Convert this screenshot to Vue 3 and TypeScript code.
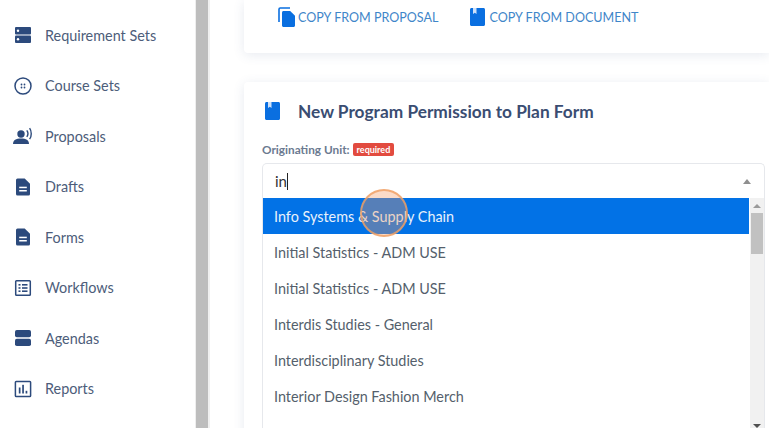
<script setup lang="ts">
const navItems: { label: string; icon: string }[] = [
  { label: 'Requirement Sets', icon: 'server' },
  { label: 'Course Sets', icon: 'button' },
  { label: 'Proposals', icon: 'voice' },
  { label: 'Drafts', icon: 'doc' },
  { label: 'Forms', icon: 'doc' },
  { label: 'Workflows', icon: 'list' },
  { label: 'Agendas', icon: 'agenda' },
  { label: 'Reports', icon: 'chart' },
]
const options: string[] = [
  'Info Systems & Supply Chain',
  'Initial Statistics - ADM USE',
  'Initial Statistics - ADM USE',
  'Interdis Studies - General',
  'Interdisciplinary Studies',
  'Interior Design Fashion Merch',
]
</script>

<template>
  <div class="page">
    <aside class="sidebar">
      <div v-for="item in navItems" :key="item.label" class="nav-item">
        <svg class="nav-icon" viewBox="0 0 18 18" aria-hidden="true">
          <template v-if="item.icon === 'server'">
            <rect x="1" y="1" width="16" height="7.4" rx="1" fill="#2c4a7c" />
            <rect x="1" y="9.6" width="16" height="7.4" rx="1" fill="#2c4a7c" />
            <circle cx="4" cy="4.7" r="1.2" fill="#fff" />
            <circle cx="4" cy="13.3" r="1.2" fill="#fff" />
          </template>
          <template v-else-if="item.icon === 'button'">
            <circle cx="9" cy="9" r="8" fill="none" stroke="#2c4a7c" stroke-width="1.5" />
            <g fill="#2c4a7c">
              <circle cx="7.5" cy="7.500" r="0.9" /><circle cx="10.5" cy="7.500" r="0.9" />
              <circle cx="7.5" cy="10.5" r="0.9" /><circle cx="10.5" cy="10.5" r="0.9" />
            </g>
          </template>
          <template v-else-if="item.icon === 'voice'">
            <circle cx="7" cy="7" r="3.700" fill="#2c4a7c" />
            <path d="M-1 17c0-3.600 3-5.400 8-5.400s8 1.800 8 5.400z" fill="#2c4a7c" />
            <path d="M12.800 3.400c1.300 1.800 1.300 4.700 0 6.500M15.600 1.200c2.200 3 2.200 8 0 11" fill="none" stroke="#2c4a7c" stroke-width="1.400" />
          </template>
          <template v-else-if="item.icon === 'doc'">
            <path d="M3.500 0.500h7.200L16 5.800v10.200a1.500 1.500 0 0 1-1.500 1.500h-11A1.500 1.500 0 0 1 2 16V2A1.500 1.500 0 0 1 3.500 0.500z" fill="#2c4a7c" />
            <rect x="5.200" y="8.700" width="7.600" height="1.500" fill="#fff" />
            <rect x="5.200" y="12" width="7.600" height="1.500" fill="#fff" />
          </template>
          <template v-else-if="item.icon === 'list'">
            <rect x="1.700" y="1.700" width="14.600" height="14.600" rx="0.800" fill="none" stroke="#2c4a7c" stroke-width="1.500" />
            <g fill="#2c4a7c">
              <rect x="4.500" y="5" width="2" height="1.600" /><rect x="8" y="5" width="5.500" height="1.600" />
              <rect x="4.500" y="8.200" width="2" height="1.600" /><rect x="8" y="8.200" width="5.500" height="1.600" />
              <rect x="4.500" y="11.400" width="2" height="1.600" /><rect x="8" y="11.400" width="5.500" height="1.600" />
            </g>
          </template>
          <template v-else-if="item.icon === 'agenda'">
            <rect x="1" y="1" width="16" height="7.300" rx="1.800" fill="#2c4a7c" />
            <rect x="1" y="9.700" width="16" height="7.300" rx="1.800" fill="#2c4a7c" />
          </template>
          <template v-else>
            <rect x="1.400" y="1.400" width="15.200" height="15.200" rx="0.800" fill="none" stroke="#2c4a7c" stroke-width="1.500" />
            <g fill="#2c4a7c">
              <rect x="4.800" y="7.500" width="1.700" height="6" /><rect x="8.200" y="4.800" width="1.700" height="8.700" /><rect x="11.600" y="10.800" width="1.700" height="2.700" />
            </g>
          </template>
        </svg>
        <span class="nav-label">{{ item.label }}</span>
      </div>
    </aside>
    <div class="side-scroll"></div>
    <main class="main">
      <section class="card card-top">
        <a class="copy-link">
          <svg class="copy-icon" viewBox="0 0 18 20" aria-hidden="true">
            <path d="M1 15V2.200C1 1.500 1.500 1 2.200 1H12" fill="none" stroke="#0a6fe0" stroke-width="1.600" />
            <path d="M5.500 4h6.700L17 8.800v9.700c0 .8-.7 1.500-1.500 1.500h-10C4.700 20 4 19.300 4 18.500v-13C4 4.700 4.700 4 5.500 4z" fill="#0a6fe0" />
          </svg>
          COPY FROM PROPOSAL
        </a>
        <a class="copy-link doc-link">
          <svg class="book-icon" viewBox="0 0 15 18" aria-hidden="true">
            <path d="M1.500 0h12c.8 0 1.500.7 1.500 1.500v15c0 .8-.7 1.500-1.500 1.500h-12C.7 18 0 17.300 0 16.500v-15C0 .7.700 0 1.500 0z" fill="#0a6fe0" />
            <path d="M3 0h3.500v6L4.800 4.700 3 6z" fill="#cfe2fa" />
          </svg>
          COPY FROM DOCUMENT
        </a>
      </section>
      <section class="card card-form">
        <h2 class="form-title">
          <svg class="title-icon" viewBox="0 0 15 18" aria-hidden="true">
            <path d="M1.500 0h12c.8 0 1.500.7 1.500 1.500v15c0 .8-.7 1.500-1.500 1.500h-12C.7 18 0 17.300 0 16.500v-15C0 .7.700 0 1.500 0z" fill="#0a6fe0" />
            <path d="M3 0h3.500v6L4.800 4.700 3 6z" fill="#cfe2fa" />
          </svg>
          New Program Permission to Plan Form
        </h2>
        <div class="field-label">
          <span>Originating Unit:</span>
          <span class="badge">required</span>
        </div>
        <div class="select">
          <div class="select-input">
            <span class="typed">in</span><span class="caret"></span>
            <span class="arrow"></span>
          </div>
          <div class="dropdown">
            <ul class="options">
              <li v-for="(opt, i) in options" :key="i" class="option" :class="{ active: i === 0 }">{{ opt }}</li>
            </ul>
            <div class="drop-scroll">
              <span class="drop-arrow"></span>
              <span class="drop-thumb"></span>
              <span class="drop-arrow-down"></span>
            </div>
          </div>
          <div class="click-ring"></div>
        </div>
      </section>
    </main>
  </div>
</template>

<style>
html, body { margin: 0; overflow: hidden; background: #fff; }
</style>

<style scoped>
.page {
  width: 769px;
  height: 428px;
  overflow: hidden;
  display: flex;
  font-family: Lato, "Liberation Sans", sans-serif;
  background: #fff;
}
.sidebar {
  width: 196px;
  flex: none;
  padding-top: 10px;
  border-right: 1px solid #eeeeee;
  box-sizing: border-box;
}
.nav-item {
  height: 50.5px;
  display: flex;
  align-items: center;
  padding-left: 14px;
  box-sizing: border-box;
}
.nav-icon { width: 18px; height: 18px; flex: none; overflow: visible; }
.nav-label {
  margin-left: 13px;
  font-size: 14.400px;
  color: #4d5d7a;
}
.side-scroll {
  width: 12px;
  flex: none;
  background: #bdbdbd;
}
.main {
  flex: 1;
  min-width: 0;
  border-left: 2px solid #f0f0f0;
  padding-left: 34px;
  background: #fff;
}
.card {
  background: #fff;
  box-shadow: 0 2px 12px rgba(60, 80, 130, 0.12);
}
.card-top {
  height: 53px;
  display: flex;
  align-items: flex-start;
  padding: 7px 0 0 34px;
  box-sizing: border-box;
  border-radius: 0 0 0 4px;
}
.copy-link {
  display: flex;
  align-items: center;
  font-size: 12.550px;
  height: 20px;
  color: #3f86c9;
  white-space: nowrap;
}
.copy-icon { width: 18px; height: 20px; margin-right: 2px; }
.doc-link { margin-left: 32px; }
.book-icon { width: 15px; height: 18px; margin-right: 4px; }
.card-form {
  margin-top: 29px;
  height: 400px;
  padding: 18px 4px 0 18px;
  box-sizing: border-box;
  border-radius: 4px 0 0 4px;
}
.form-title {
  margin: 0;
  display: flex;
  align-items: center;
  height: 22px;
  font-size: 17.300px;
  font-weight: 700;
  color: #3a4d72;
  white-space: nowrap;
}
.title-icon { width: 15px; height: 18px; margin-left: 3px; margin-right: 18px; }
.field-label {
  margin-top: 19px;
  display: flex;
  align-items: center;
  height: 16px;
  font-size: 11.800px;
  font-weight: 700;
  color: #6b7a90;
}
.badge {
  margin-left: 3px;
  background: #e24b3f;
  color: #fff;
  font-size: 9px;
  line-height: 13px;
  padding: 0 4px;
  border-radius: 2px;
}
.select {
  position: relative;
  margin-top: 6px;
}
.select-input {
  position: relative;
  height: 35px;
  box-sizing: border-box;
  border: 1px solid #e6e8ec;
  border-bottom: 0;
  border-radius: 5px 5px 0 0;
  display: flex;
  align-items: center;
  padding-left: 12px;
  font-size: 15px;
  color: #333;
}
.caret { width: 1px; height: 17px; background: #222; }
.arrow {
  position: absolute;
  right: 13px;
  top: 15px;
  border-left: 4.500px solid transparent;
  border-right: 4.500px solid transparent;
  border-bottom: 5px solid #8f8f8f;
}
.dropdown {
  display: flex;
  height: 230px;
  border-left: 1px solid #e6e8ec;
  border-right: 1px solid #e6e8ec;
  box-sizing: border-box;
}
.options { flex: 1; margin: 0; padding: 0; list-style: none; min-width: 0; overflow: hidden; }
.option {
  height: 36px;
  line-height: 37px;
  padding-left: 11px;
  font-size: 14.400px;
  color: #555f6c;
  white-space: nowrap;
}
.option.active {
  background: #0272e6;
  color: #e8f1fb;
}
.drop-scroll {
  position: relative;
  width: 14px;
  flex: none;
  background: #f1f1f1;
  margin-left: 1px;
}
.drop-arrow {
  position: absolute;
  left: 3px;
  top: 6px;
  border-left: 4px solid transparent;
  border-right: 4px solid transparent;
  border-bottom: 4px solid #9a9a9a;
}
.drop-thumb {
  position: absolute;
  left: 1px;
  right: 1px;
  top: 15px;
  height: 41px;
  background: #c1c1c1;
}
.drop-arrow-down {
  position: absolute;
  left: 3px;
  bottom: 0;
  border-left: 4px solid transparent;
  border-right: 4px solid transparent;
  border-top: 4px solid #505050;
}
.click-ring {
  position: absolute;
  left: 98px;
  top: 26px;
  width: 48px;
  height: 48px;
  box-sizing: border-box;
  border-radius: 50%;
  border: 2px solid rgba(240, 160, 100, 0.8);
  background: rgba(243, 152, 98, 0.35);
}
</style>
